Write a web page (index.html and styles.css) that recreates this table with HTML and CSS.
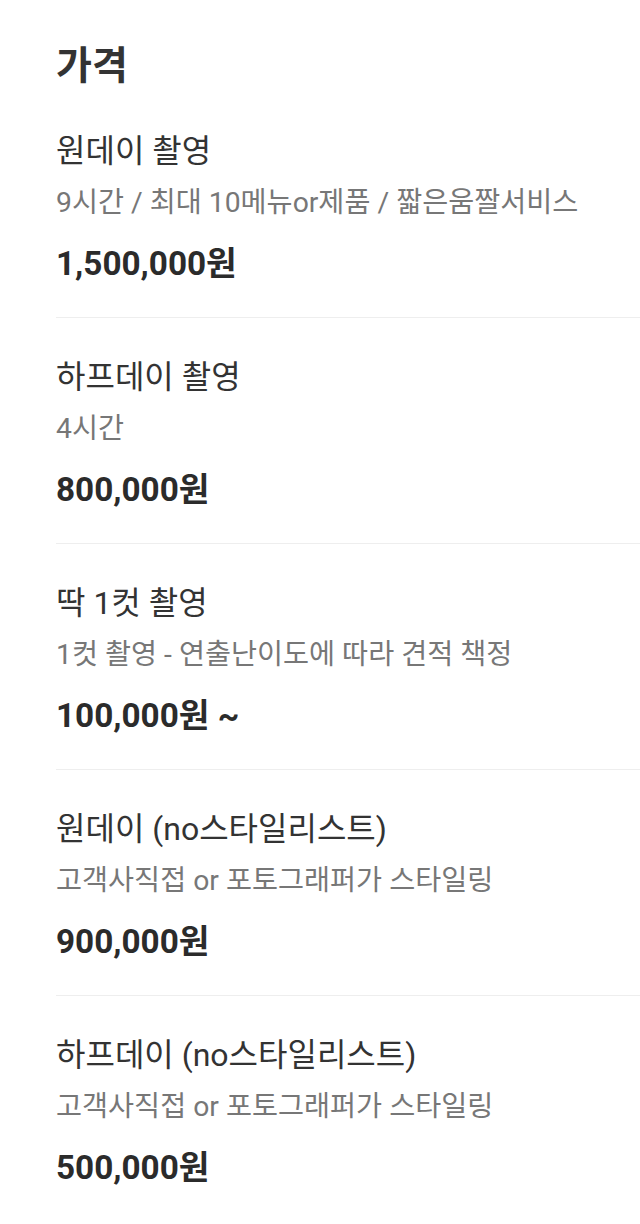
FILE: index.html
```html
<!DOCTYPE html>
<html lang="ko">
<head>
<meta charset="utf-8">
<link rel="stylesheet" href="styles.css">
</head>
<body>
<section class="prices">
  <h2 class="title">가격</h2>
  <ul class="list">
    <li class="item">
      <div class="name">원데이 촬영</div>
      <div class="desc">9시간 / 최대 10메뉴or제품 / 짧은움짤서비스</div>
      <div class="price">1,500,000원</div>
    </li>
    <li class="item">
      <div class="name">하프데이 촬영</div>
      <div class="desc">4시간</div>
      <div class="price">800,000원</div>
    </li>
    <li class="item">
      <div class="name">딱 1컷 촬영</div>
      <div class="desc">1컷 촬영 - 연출난이도에 따라 견적 책정</div>
      <div class="price">100,000원 ~</div>
    </li>
    <li class="item">
      <div class="name">원데이 (no스타일리스트)</div>
      <div class="desc">고객사직접 or 포토그래퍼가 스타일링</div>
      <div class="price">900,000원</div>
    </li>
    <li class="item">
      <div class="name">하프데이 (no스타일리스트)</div>
      <div class="desc">고객사직접 or 포토그래퍼가 스타일링</div>
      <div class="price">500,000원</div>
    </li>
  </ul>
</section>
</body>
</html>
```
FILE: styles.css
```css
html, body {
  margin: 0;
  padding: 0;
  background: #ffffff;
}
body {
  font-family: Roboto, "Noto Sans CJK KR", sans-serif;
  color: #333333;
}
.prices {
  padding: 41px 0 0 56px;
}
.title {
  margin: 0 0 1px 0;
  font-size: 39px;
  line-height: 50px;
  font-weight: 700;
  color: #333333;
}
.list {
  list-style: none;
  margin: 0;
  padding: 0;
}
.item {
  padding: 39px 0 33px 0;
  border-bottom: 1px solid #eeeeee;
}
.item:last-child {
  border-bottom: none;
}
.name,
.desc,
.price {
  white-space: nowrap;
}
.name {
  font-size: 32px;
  line-height: 40px;
  font-weight: 400;
  color: #333333;
}
.desc {
  margin-top: 14px;
  font-size: 28.3px;
  line-height: 36px;
  color: #777777;
}
.price {
  margin-top: 23px;
  font-size: 33.3px;
  line-height: 40px;
  font-weight: 700;
  color: #2b2b2b;
}
```
